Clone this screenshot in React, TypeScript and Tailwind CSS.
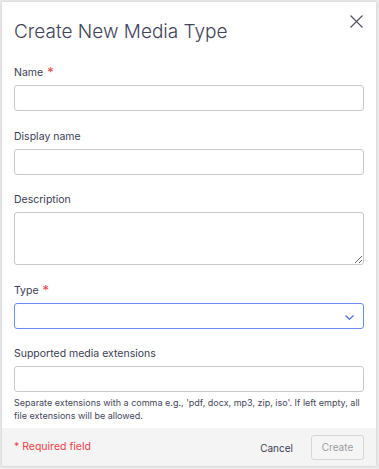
import React from "react";

const labelCls = "block text-[10.5px] leading-[16px] text-[#3b3d54] mb-[4px]";
const inputCls = "block w-full h-[26px] rounded-[3px] border border-[#c9c9cc] bg-white";

function Star() {
  return <span className="text-[#f0404a] ml-[4px] text-[13px] leading-[10px] relative top-[1px]">*</span>;
}

export default function App() {
  return (
    <div className="w-[379px] h-[469px] bg-[#ebebeb] pt-[2px] pl-[2px]" style={{ fontFamily: "Inter, 'Noto Sans', sans-serif" }}>
      <div className="w-[374px] h-[464px] bg-white shadow-[0_0_3px_rgba(0,0,0,0.15)] flex flex-col">
        <div className="relative px-[12px] pt-[16px]">
          <h1 className="text-[19px] leading-[28px] font-light text-[#41435a]">Create New Media Type</h1>
          <button className="absolute right-[13px] top-[12px] w-[14px] h-[14px] flex items-center justify-center">
            <svg width="13" height="13" viewBox="0 0 13 13" fill="none" stroke="#4c4e60" strokeWidth="1.1">
              <path d="M0.5 0.5 L12.5 12.5 M12.5 0.5 L0.5 12.5" />
            </svg>
          </button>
        </div>
        <div className="px-[12px] pt-[19px] flex flex-col gap-[17.5px]">
          <div>
            <label className={labelCls}>Name<Star /></label>
            <input className={inputCls} />
          </div>
          <div>
            <label className={labelCls}>Display name</label>
            <input className={inputCls} />
          </div>
          <div>
            <label className={labelCls}>Description</label>
            <textarea className="block w-full h-[53px] rounded-[3px] border border-[#c9c9cc] bg-white" />
          </div>
          <div>
            <label className={labelCls}>Type<Star /></label>
            <div className="relative w-full h-[26px] rounded-[3px] border border-[#6d8cf6] bg-white">
              <svg className="absolute right-[9px] top-[11px]" width="9" height="5" viewBox="0 0 9 5" fill="none" stroke="#4a6cf0" strokeWidth="1.2">
                <path d="M0.5 0.5 L4.5 4.3 L8.5 0.5" />
              </svg>
            </div>
          </div>
          <div>
            <label className={labelCls}>Supported media extensions</label>
            <input className={inputCls} />
            <p className="mt-[4px] text-[9px] leading-[13px] text-[#45475c]">
              Separate extensions with a comma e.g., 'pdf, docx, mp3, zip, iso'. If left empty, all file extensions will be allowed.
            </p>
          </div>
        </div>
        <div className="mt-auto h-[38px] bg-[#f4f4f4] flex items-center px-[12px]">
          <span className="text-[10.5px] text-[#f0404a]">* Required field</span>
          <span className="ml-auto text-[10px] text-[#3b3d54] mt-[3px]">Cancel</span>
          <button className="ml-[18px] w-[53px] h-[25px] rounded-[3px] border border-[#d6d6d8] text-[10px] text-[#9c9ca4] bg-[#f5f5f5]">Create</button>
        </div>
      </div>
    </div>
  );
}
